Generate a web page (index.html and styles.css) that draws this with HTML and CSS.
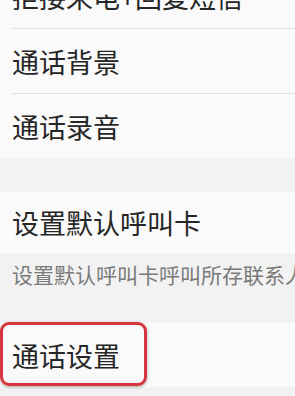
FILE: index.html
```html
<!DOCTYPE html>
<html lang="zh-CN">
  <head>
    <meta charset="UTF-8">
    <meta name="viewport" content="width=device-width, initial-scale=1.0">
    <title>通话设置</title>
    <link rel="stylesheet" href="styles.css">
  </head>
  <body>
    <div class="page">
      <!-- 第一组 -->
      <ul class="group first">
        <li class="item line">拒接来电+回复短信</li>
        <li class="item line">通话背景</li>
        <li class="item">通话录音</li>
      </ul>

      <div class="gap"></div>

      <ul class="group">
        <li class="item short">设置默认呼叫卡</li>
      </ul>
      <p class="desc">设置默认呼叫卡呼叫所存联系人</p>

      <ul class="group">
        <li class="item mark">通话设置<span class="box"></span></li>
      </ul>
    </div>
  </body>
</html>
```

FILE: styles.css
```css
html,
body {
  margin: 0;
  padding: 0;
}

body {
  background: #f2f2f2;
  font-family: "Noto Sans CJK SC", "Noto Sans", sans-serif;
  color: #262626;
  overflow: hidden;
}

.page {
  width: 295px;
  height: 396px;
  overflow: hidden;
}

.group {
  list-style: none;
  margin: 0;
  padding: 0;
  background: #fafafa;
}

.group.first {
  margin-top: -36px;
}

.item {
  position: relative;
  height: 64px;
  display: flex;
  align-items: center;
  padding-left: 12px;
  font-size: 27px;
  line-height: 1;
  white-space: nowrap;
}

/* 구분선: 왼쪽은 12px 들여쓰기 */
.item.line::after {
  content: "";
  position: absolute;
  left: 12px;
  right: 0;
  bottom: 0;
  height: 1px;
  background: #e2e2e2;
}

.item.line {
  height: 65px;
  box-sizing: border-box;
  padding-bottom: 1px;
}

.gap {
  height: 34px;
}

.item.short {
  height: 61px;
}

.desc {
  margin: 0;
  padding: 8px 0 0 12px;
  height: 62px;
  font-size: 21px;
  line-height: 26px;
  color: #7a7a7a;
  white-space: nowrap;
  overflow: hidden;
}

.item.mark {
  height: 64px;
}

/* 빨간 표시 박스 */
.box {
  position: absolute;
  left: 0;
  top: -1px;
  width: 141px;
  height: 58px;
  border: 3px solid #d8363d;
  border-radius: 9px;
  box-shadow: 0 1px 3px rgba(0, 0, 0, 0.35);
}
```
